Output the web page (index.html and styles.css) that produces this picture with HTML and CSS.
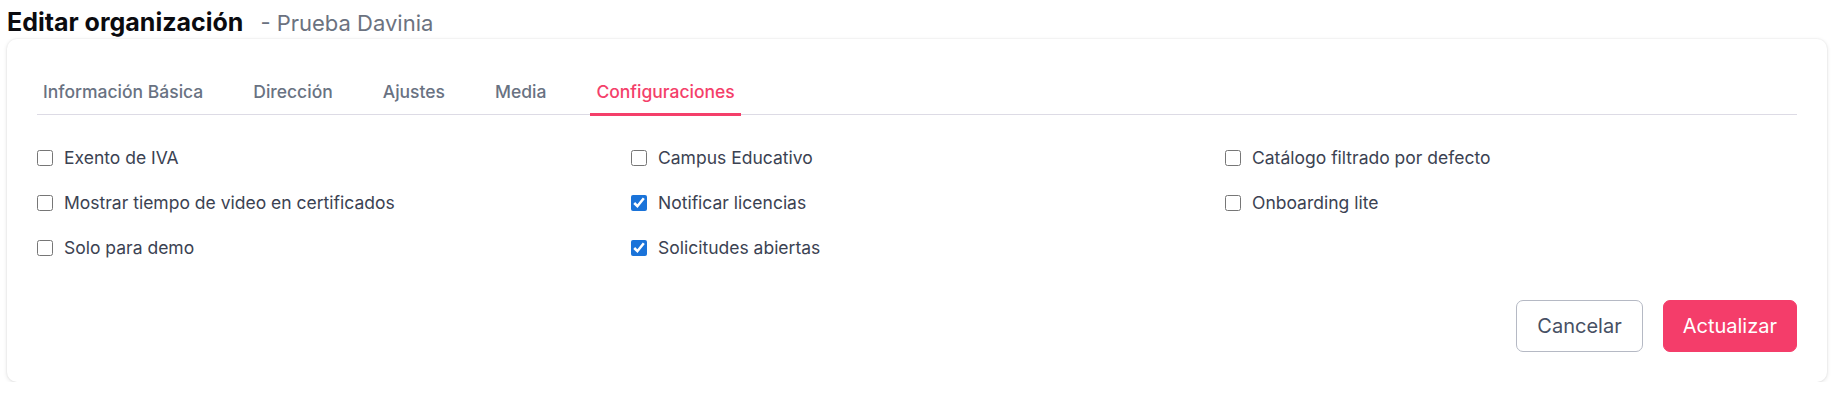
FILE: index.html
```html
<!DOCTYPE html>
<html lang="es">
<head>
<meta charset="utf-8">
<title>Editar organización</title>
<link rel="stylesheet" href="styles.css">
</head>
<body>
<div class="page">
  <header class="page-header">
    <h1 class="page-title">Editar organización</h1>
    <span class="page-subtitle">- Prueba Davinia</span>
  </header>
  <section class="card">
    <nav class="tabs">
      <a class="tab">Información Básica</a>
      <a class="tab">Dirección</a>
      <a class="tab">Ajustes</a>
      <a class="tab">Media</a>
      <a class="tab tab-active">Configuraciones</a>
    </nav>
    <div class="options">
      <label class="option"><input type="checkbox" class="check"><span>Exento de IVA</span></label>
      <label class="option"><input type="checkbox" class="check"><span>Campus Educativo</span></label>
      <label class="option"><input type="checkbox" class="check"><span>Catálogo filtrado por defecto</span></label>
      <label class="option"><input type="checkbox" class="check"><span>Mostrar tiempo de video en certificados</span></label>
      <label class="option"><input type="checkbox" class="check" checked><span>Notificar licencias</span></label>
      <label class="option"><input type="checkbox" class="check"><span>Onboarding lite</span></label>
      <label class="option"><input type="checkbox" class="check"><span>Solo para demo</span></label>
      <label class="option"><input type="checkbox" class="check" checked><span>Solicitudes abiertas</span></label>
    </div>
    <div class="actions">
      <button class="btn btn-outline">Cancelar</button>
      <button class="btn btn-primary">Actualizar</button>
    </div>
  </section>
</div>
</body>
</html>
```
FILE: styles.css
```css
* { box-sizing: border-box; }
html, body { margin: 0; padding: 0; background: #fff; }
body { font-family: Inter, "Noto Sans", sans-serif; color: #374151; }

.page { padding: 7px 16px 0 7px; }

.page-header {
  display: flex;
  align-items: baseline;
  gap: 17px;
  height: 30px;
}
.page-title {
  margin: 0;
  font-size: 25px;
  line-height: 30px;
  font-weight: 700;
  color: #0b0b0f;
}
.page-subtitle {
  font-size: 22px;
  line-height: 30px;
  color: #6b7280;
}

.card {
  margin-top: 2px;
  background: #fff;
  border-radius: 10px;
  box-shadow: 0 1px 4px rgba(0, 0, 0, 0.12), 0 0 0 1px rgba(0, 0, 0, 0.02);
  padding: 30px 30px 30px 30px;
}

.tabs {
  display: flex;
  gap: 38px;
  border-bottom: 1px solid #dddbe5;
}
.tab {
  padding: 12px 6px 10px;
  font-size: 17.5px;
  line-height: 22px;
  font-weight: 500;
  color: #697282;
  border-bottom: 3px solid transparent;
  margin-bottom: -2px;
  cursor: pointer;
}
.tab-active {
  color: #f43f6a;
  border-bottom-color: #f43f6a;
}

.options {
  display: grid;
  grid-template-columns: repeat(3, 1fr);
  column-gap: 22px;
  row-gap: 19px;
  margin-top: 30px;
}
.option {
  display: flex;
  align-items: center;
  gap: 11px;
  font-size: 17.5px;
  line-height: 26px;
  color: #3b4252;
}
.check {
  width: 16px;
  height: 16px;
  margin: 0;
  accent-color: #1a73d9;
}

.actions {
  display: flex;
  justify-content: flex-end;
  gap: 20px;
  margin-top: 39px;
}
.btn {
  height: 52px;
  padding: 0 19px;
  font-family: Inter, "Noto Sans", sans-serif;
  font-size: 20px;
  border-radius: 7px;
  border: 1px solid transparent;
  cursor: pointer;
}
.btn-outline {
  padding: 0 20px;
  background: #fff;
  border-color: #b5b9c4;
  color: #475063;
}
.btn-primary {
  background: #f43d6a;
  border-color: #f43d6a;
  color: #fff;
}
```
